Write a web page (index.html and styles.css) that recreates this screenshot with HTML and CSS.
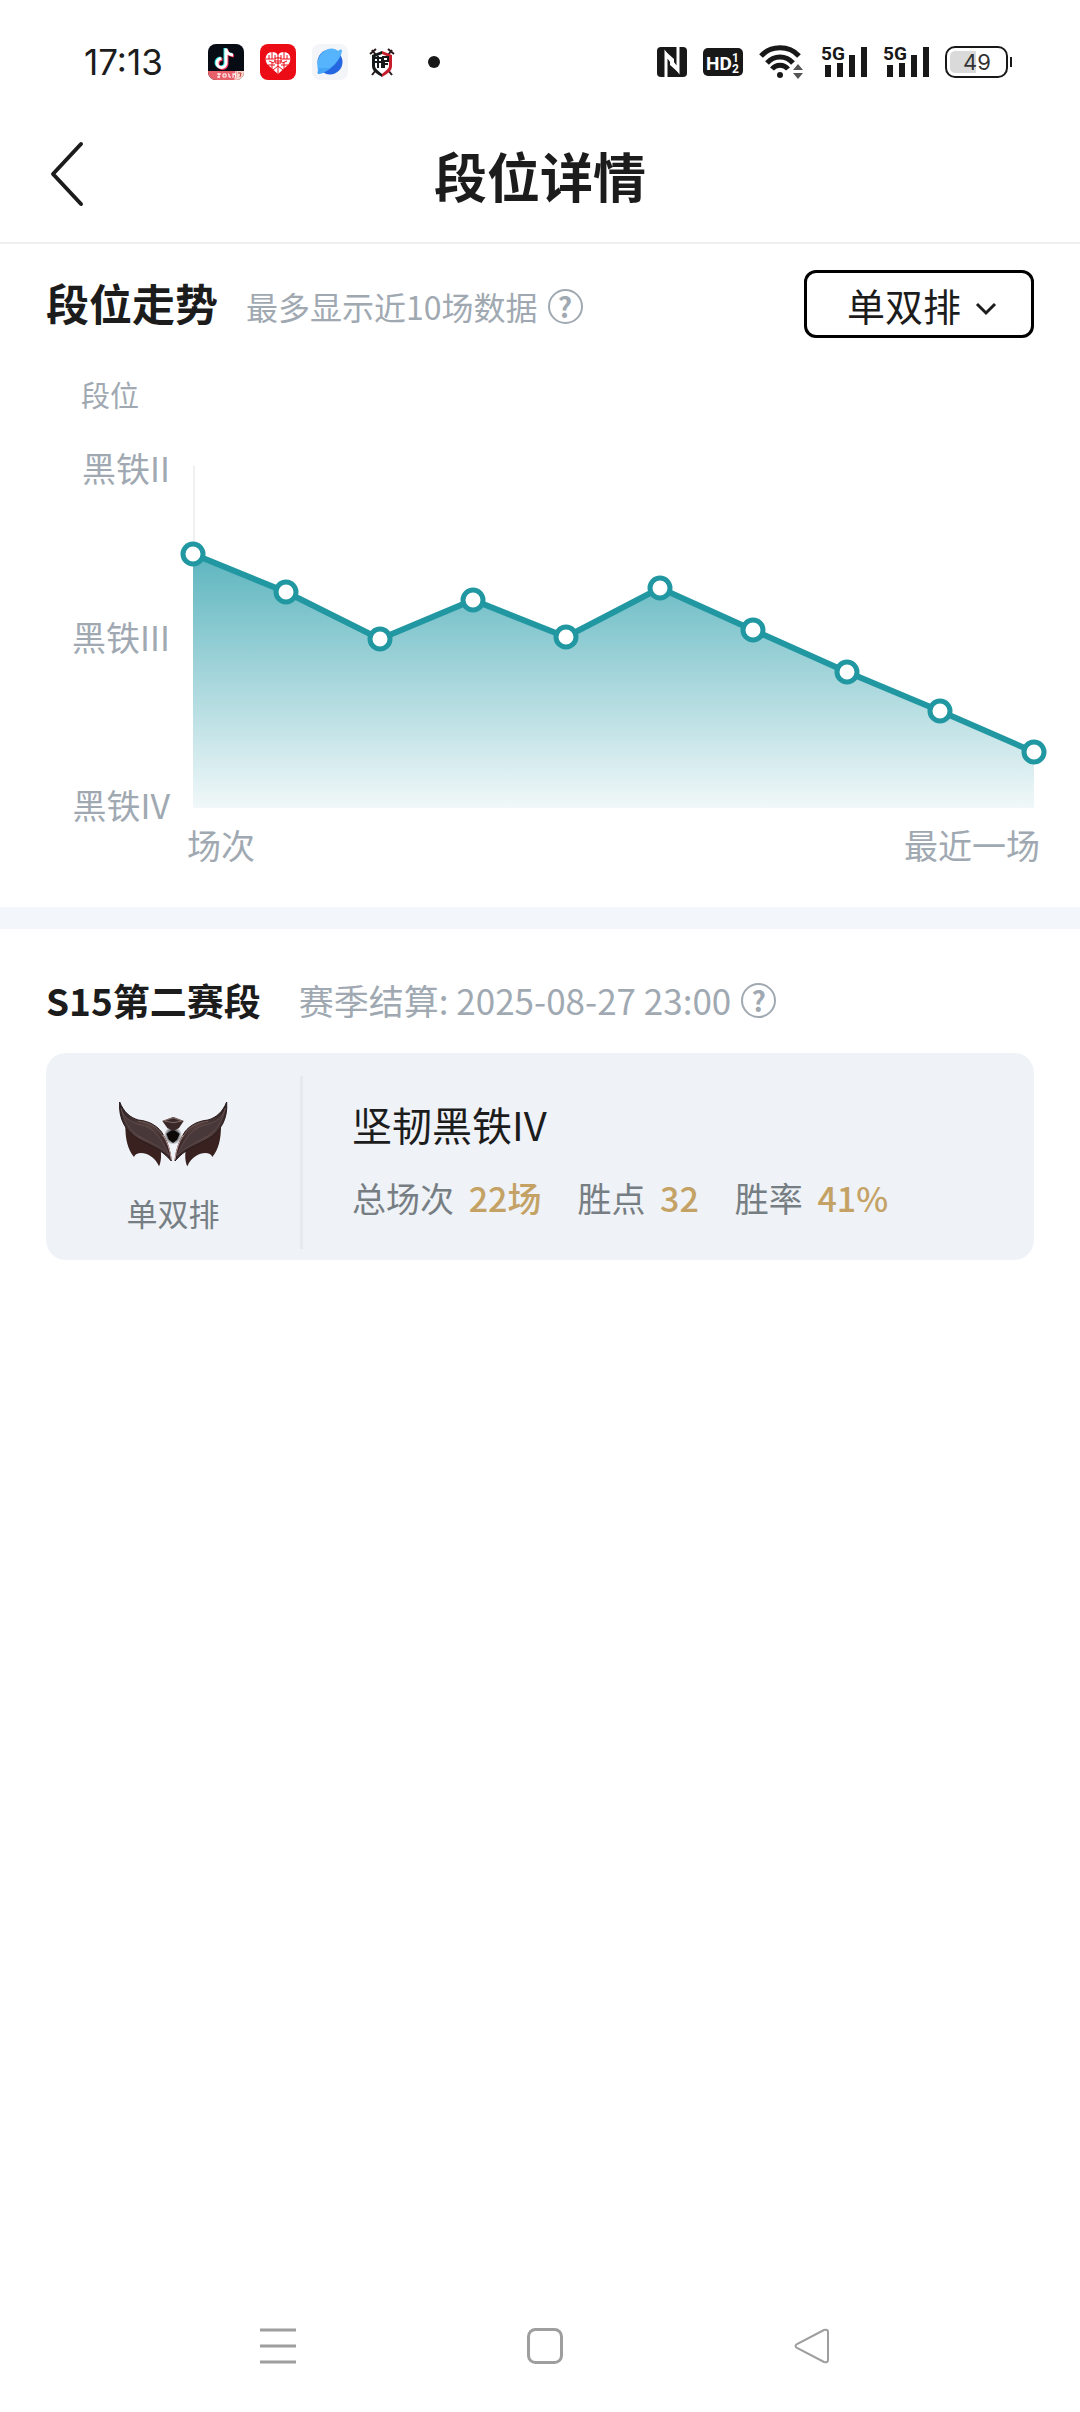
FILE: index.html
```
<!DOCTYPE html>
<html lang="zh-CN">
<head>
    <meta charset="UTF-8">
    <meta name="viewport" content="width=device-width, initial-scale=1.0">
    <title>段位详情</title>
    <link rel="stylesheet" href="styles.css">
</head>
<body>
    <div class="status-bar">
        <span class="time">17:13</span>
        <div class="app-icons">
            <svg width="36" height="36" viewBox="0 0 36 36">
                <clipPath id="appClip"><rect width="36" height="36" rx="8"/></clipPath>
                <g clip-path="url(#appClip)">
                    <rect width="36" height="36" fill="#070b14"/>
                    <g fill="none" stroke-width="3">
                        <path d="M17 4v14.500a4.500 4.500 0 1 1-4.500-4.500M17 4c0 4 3 6 7 6.500" stroke="#25e5e5"/>
                        <path d="M19 5.500v14.500a4.500 4.500 0 1 1-4.500-4.500M19 5.500c0 4 3 6 7 6.500" stroke="#f5365c"/>
                        <path d="M18 4.500v14.500a4.500 4.500 0 1 1-4.500-4.500M18 4.500c0 4 3 6 7 6.500" stroke="#fff"/>
                    </g>
                    <path d="M0 27h36v9H0z" fill="#e8606a"/>
                    <path d="M9 30h4M11 29v5M9 33h3M15 30h3v3h-3zM20 30h1v3h2M24 30h3l-2 1v3M28 27l-1 9" stroke="#fff" fill="none"/>
                    <path d="M29 27h7v9h-8z" fill="#f8d5c8"/>
                    <path d="M30 29h3l-1 4" stroke="#c43b3b" fill="none"/>
                </g>
            </svg>
            <svg width="36" height="36" viewBox="0 0 36 36">
                <rect width="36" height="36" rx="8" fill="#ec0c16"/>
                <path d="M18 30L8 21c-4-4-3-13 4-13 3 0 5 1 6 3 1-2 3-3 6-3 7 0 8 9 4 13z" fill="#fff"/>
                <g fill="none" stroke="#ec0c16">
                    <path d="M18 9v5M18 19v11M6 15h8M22 15h8M8 21h7M21 21h7M12 8v7M24 8v7M12 18v7M24 18v7M15 11v4M21 11v4M9 11v4M27 11v4M9 17l5 2M27 17l-5 2M13 26l5-4 5 4"/>
                    <path d="M15 14h6v5h-6zM18 13v7M14 17h8" stroke-width="1"/>
                </g>
            </svg>
            <svg width="36" height="36" viewBox="0 0 36 36">
                <rect width="36" height="36" rx="8" fill="#f3f5f8"/>
                <circle cx="18" cy="18" r="12.500" fill="#2567e0"/>
                <path d="M29 11C25 20 16 28 7 29C4 22 5 13 11 8S23 4 26 7c2-2 4-2 4 0z" fill="#55b4fb"/>
                <path d="M7 24c-2 4-2 6 0 6 3 0 8-3 12-6z" fill="#46a4f6"/>
            </svg>
            <svg width="36" height="36" viewBox="0 0 36 36">
                <path d="M8 6l20 25M28 6L8 31M6 10l6-5M24 5l6 5" stroke="#29191b" stroke-width="2" fill="none"/>
                <path d="M18 7l10 4v11c0 5-5 8-10 11z" fill="#c61d2d"/>
                <path d="M18 7L8 11v11c0 5 5 8 10 11z" fill="#17181a"/>
                <path d="M18 10l7 3v9c0 3-4 5-7 8-3-3-7-5-7-8v-9z" fill="#fff"/>
                <path d="M11 14h7M14 12v12M11 18h7M18 15v9M19 13h5v4h-5zM20 17v7M20 20h4" stroke="#17181a" stroke-width="2" fill="none"/>
            </svg>
            <svg width="36" height="36" viewBox="0 0 36 36"><circle cx="18" cy="18" r="6" fill="#181818"/></svg>
        </div>
        <div class="system-icons">
            <svg width="30" height="30" viewBox="0 0 30 30">
                <rect width="30" height="30" rx="4" fill="#181818"/>
                <path d="M9 30V7l12 16V0" fill="none" stroke="#fff" stroke-width="3"/>
                <path d="M8 4l9 8v7zM22 26l-9-8v-7z" fill="#fff"/>
            </svg>
            <svg width="40" height="28" viewBox="0 0 40 28">
                <rect width="40" height="28" rx="5" fill="#181818"/>
                <text x="3" y="22" class="hd-text">HD</text>
                <text x="29" y="14" class="hd-small">1</text>
                <text x="29" y="25" class="hd-small">2</text>
            </svg>
            <svg width="46" height="34" viewBox="0 0 46 34">
                <g fill="none" stroke="#181818" stroke-width="5">
                    <path d="M2 11c10-11 28-11 38 0"/>
                    <path d="M8 18c7-8 19-8 26 0"/>
                    <path d="M13 24c4-5 12-5 16 0"/>
                </g>
                <circle cx="21" cy="30" r="3" fill="#181818"/>
                <path d="M34 25l5-6 5 6zM34 28h10l-5 6z" fill="#555"/>
            </svg>
            <svg width="46" height="34" viewBox="0 0 46 34">
                <text x="0" y="15" class="net-text">5G</text>
                <path d="M7 20v12M19 18v14M31 10v22M43 2v30" stroke="#181818" stroke-width="6"/>
            </svg>
            <svg width="46" height="34" viewBox="0 0 46 34">
                <text x="0" y="15" class="net-text">5G</text>
                <path d="M7 20v12M19 18v14M31 10v22M43 2v30" stroke="#181818" stroke-width="6"/>
            </svg>
            <svg width="67" height="32" viewBox="0 0 67 32">
                <rect x="1" y="1" width="61" height="30" rx="9" fill="none" stroke="#181818" stroke-width="2"/>
                <path d="M31 5H11c-4 0-6 2-6 6v10c0 4 2 6 6 6h20z" fill="#dadada"/>
                <path d="M66 11v10" stroke="#181818" stroke-width="2"/>
                <text x="32" y="24" class="battery-text">49</text>
            </svg>
        </div>
    </div>

    <header class="title-bar">
        <button class="back" aria-label="返回">
            <svg width="36" height="66" viewBox="0 0 36 66">
                <path d="M33 2L5 32l28 30" fill="none" stroke="#1c1c1c" stroke-width="4" stroke-linecap="round" stroke-linejoin="round"/>
            </svg>
        </button>
        <h1>段位详情</h1>
    </header>

    <section class="trend">
        <div class="trend-head">
            <h2>段位走势</h2>
            <div class="hint">
                <span class="note">最多显示近10场数据</span>
                <button class="help" aria-label="走势说明">?</button>
            </div>
            <div class="queue">
                <select aria-label="队列类型">
                    <option>单双排</option>
                </select>
                <svg width="20" height="14" viewBox="0 0 20 14">
                    <path d="M1 2l9 9 9-9" fill="none" stroke="#1c1c1c" stroke-width="3"/>
                </svg>
            </div>
        </div>
        <div class="axis-title">段位</div>
        <div class="chart">
            <div class="y-labels">
                <span>黑铁II</span>
                <span>黑铁III</span>
                <span>黑铁IV</span>
            </div>
            <svg class="plot" viewBox="0 0 841 342">
                <defs>
                    <linearGradient id="areaFill" x1="0" y1="0" x2="0" y2="1">
                        <stop offset="0" stop-color="#5db5bf"/>
                        <stop offset="1" stop-color="#f1f8f9"/>
                    </linearGradient>
                </defs>
                <path d="M1 0v342" stroke="#f0f0f2" stroke-width="2"/>
                <path d="M0 88L93 126L187 173L280 134L373 171L467 122L560 164L654 206L747 245L841 286V342H0z" fill="url(#areaFill)"/>
                <path class="line" d="M0 88L93 126L187 173L280 134L373 171L467 122L560 164L654 206L747 245L841 286"/>
                <g class="dots">
                    <circle cx="0" cy="88" r="10"/>
                    <circle cx="93" cy="126" r="10"/>
                    <circle cx="187" cy="173" r="10"/>
                    <circle cx="280" cy="134" r="10"/>
                    <circle cx="373" cy="171" r="10"/>
                    <circle cx="467" cy="122" r="10"/>
                    <circle cx="560" cy="164" r="10"/>
                    <circle cx="654" cy="206" r="10"/>
                    <circle cx="747" cy="245" r="10"/>
                    <circle cx="841" cy="286" r="10"/>
                </g>
            </svg>
            <div class="x-labels">
                <span>场次</span>
                <span>最近一场</span>
            </div>
        </div>
    </section>

    <section class="season">
        <div class="season-head">
            <h3>S15第二赛段</h3>
            <span class="settle">赛季结算: 2025-08-27 23:00</span>
            <button class="help" aria-label="结算说明">?</button>
        </div>
        <div class="card">
            <div class="emblem">
                <svg width="108" height="66" viewBox="60 62 324 198">
                    <defs>
                        <linearGradient id="wing" x1="0" y1="0" x2="1" y2="1">
                            <stop offset="0" stop-color="#2a2022"/>
                            <stop offset="0.5" stop-color="#54403f"/>
                            <stop offset="1" stop-color="#2c1d1f"/>
                        </linearGradient>
                        <radialGradient id="core">
                            <stop offset="0.3" stop-color="#000"/>
                            <stop offset="1" stop-color="#000" stop-opacity="0"/>
                        </radialGradient>
                        <g id="half">
                            <path d="M79 138C79 175 86 208 105 230C112 209 161 214 180 258C185 246 188 232 185 208z" fill="#38211f"/>
                            <path d="M62 65C75 96 92 111 118 119C153 122 181 140 193 164C207 187 214 215 217 242C187 207 160 199 119 176C80 155 58 115 62 65z" fill="url(#wing)" stroke="#29191b" stroke-width="3"/>
                            <path d="M66 84C74 110 91 124 123 133C160 140 188 170 211 226C181 196 151 187 119 167C91 150 75 124 66 84z" fill="#48383a" stroke="#6d5653" stroke-width="2"/>
                            <path d="M117 123C157 127 180 145 193 170" fill="none" stroke="#6d5653" stroke-width="3"/>
                            <path d="M192 164C205 184 213 208 217 238" fill="none" stroke="#c5a09c" stroke-width="3"/>
                        </g>
                    </defs>
                    <use href="#half"/>
                    <use href="#half" transform="translate(445 0) scale(-1 1)"/>
                    <ellipse cx="222" cy="165" rx="27" ry="28" fill="url(#core)"/>
                    <path d="M202 160l20-12 20 12-8 18-12 10-12-10z" fill="#0c0808"/>
                    <path d="M190 122l33-12 31 12-14 21-17 9-18-9z" fill="#3a2828"/>
                    <path d="M190 122l33-12 31 12-31 7z" fill="#806b66"/>
                    <path d="M200 121l23-7 20 7-20 5z" fill="#3a2b2b"/>
                </svg>
                <span>单双排</span>
            </div>
            <div class="info">
                <div class="rank">坚韧黑铁IV</div>
                <div class="stats">
                    <span>总场次 <b>22场</b></span>
                    <span>胜点 <b>32</b></span>
                    <span>胜率 <b>41%</b></span>
                </div>
            </div>
        </div>
    </section>

    <nav class="nav-bar">
        <button aria-label="最近任务">
            <svg width="36" height="36" viewBox="0 0 36 36">
                <path d="M0 2h36M0 18h36M0 34h36" stroke="#9e9e9e" stroke-width="3"/>
            </svg>
        </button>
        <button aria-label="主屏幕">
            <svg width="36" height="36" viewBox="0 0 36 36">
                <rect x="1.500" y="1.500" width="33" height="33" rx="7" fill="none" stroke="#9e9e9e" stroke-width="3"/>
            </svg>
        </button>
        <button aria-label="返回上一页">
            <svg width="36" height="36" viewBox="0 0 36 36">
                <path d="M30 2L3 16q-3 2 0 4l27 14q4 1 4-2V4q0-3-4-2z" fill="none" stroke="#9e9e9e" stroke-width="2"/>
            </svg>
        </button>
    </nav>
</body>
</html>
```
FILE: styles.css
```
* {
    box-sizing: border-box;
}
body {
    margin: 0;
    min-height: 100vh;
    display: flex;
    flex-direction: column;
    background: #fff;
    color: #1c1c1c;
    font-family: "Noto Sans CJK SC", sans-serif;
}
h1, h2, h3 {
    margin: 0;
    font-weight: bold;
}
button {
    padding: 0;
    border: none;
    background: none;
    font-family: inherit;
    cursor: pointer;
}
svg {
    display: block;
    flex-shrink: 0;
    overflow: visible;
}

/* status bar */
.status-bar {
    display: flex;
    align-items: center;
    height: 110px;
    padding: 14px 68px 0 84px;
}
.time {
    min-width: 124px;
    font-family: Inter, sans-serif;
    font-size: 35px;
    line-height: 40px;
}
.app-icons,
.system-icons {
    display: flex;
    align-items: center;
    gap: 16px;
}
.system-icons {
    margin-left: auto;
}
.hd-text,
.hd-small,
.net-text {
    font-family: Roboto, sans-serif;
    font-weight: bold;
    fill: #fff;
}
.hd-text { font-size: 19px; }
.hd-small { font-size: 12px; }
.net-text {
    font-size: 19px;
    fill: #181818;
}
.battery-text {
    font-family: Inter, sans-serif;
    font-size: 22px;
    text-anchor: middle;
    fill: #333;
}

/* title bar */
.title-bar {
    display: grid;
    grid-template-columns: 1fr auto 1fr;
    align-items: center;
    height: 134px;
    padding: 0 48px 2px;
    border-bottom: 2px solid #f0f0f0;
}
.back {
    justify-self: start;
}
.title-bar h1 {
    font-size: 53px;
    line-height: 64px;
}

/* trend chart */
.trend {
    padding: 26px 46px 40px;
    border-bottom: 22px solid #f3f6fb;
}
.trend-head {
    display: flex;
    align-items: center;
}
.trend-head h2 {
    padding-bottom: 4px;
    font-size: 43px;
    line-height: 64px;
}
.hint {
    display: flex;
    align-items: center;
    margin-left: 28px;
    padding-top: 4px;
}
.note,
.axis-title,
.chart,
.settle {
    color: #a0a9b2;
}
.note {
    font-size: 32px;
    line-height: 48px;
}
.help {
    width: 35px;
    height: 35px;
    margin-left: 10px;
    border: 2px solid #a0a9b2;
    border-radius: 50%;
    color: #a0a9b2;
    font-size: 28px;
    font-weight: bold;
    line-height: 30px;
}
.queue {
    position: relative;
    width: 230px;
    margin-left: auto;
}
.queue select {
    display: block;
    width: 100%;
    height: 68px;
    padding: 0 40px;
    border: 3px solid #000;
    border-radius: 12px;
    background: #fff;
    color: #1c1c1c;
    font-family: inherit;
    font-size: 38px;
    appearance: none;
}
.queue svg {
    position: absolute;
    top: 32px;
    right: 38px;
    pointer-events: none;
}
.axis-title {
    margin: 36px 0 30px 35px;
    font-size: 29px;
    line-height: 40px;
}
.chart {
    display: grid;
    grid-template-columns: 124px 1fr;
    column-gap: 23px;
    font-size: 34px;
    line-height: 44px;
}
.y-labels {
    display: flex;
    flex-direction: column;
    justify-content: space-between;
    padding: 2px 0 3px;
    text-align: right;
}
.plot {
    width: 100%;
    padding: 22px 0;
}
.line {
    fill: none;
    stroke: #2097a1;
    stroke-width: 6;
}
.dots circle {
    fill: #fff;
    stroke: #2097a1;
    stroke-width: 5;
}
.x-labels {
    grid-column: 2;
    display: flex;
    justify-content: space-between;
    margin: -7px -6px 0;
}

/* season card */
.season {
    padding: 46px 46px;
}
.season-head {
    display: flex;
    align-items: center;
    margin-bottom: 28px;
}
.season-head h3 {
    font-size: 37px;
    line-height: 50px;
}
.settle {
    margin-left: 38px;
    font-size: 35px;
    line-height: 50px;
}
.card {
    display: flex;
    padding: 23px 0 11px;
    border-radius: 20px;
    background: #eff2f7;
}
.emblem {
    display: flex;
    flex-direction: column;
    align-items: center;
    gap: 24px;
    width: 257px;
    padding: 25px 0 14px;
    border-right: 3px solid #e6e9ee;
    color: #767e83;
    font-size: 31px;
    line-height: 44px;
}
.info {
    padding: 20px 0 0 49px;
}
.rank {
    margin-bottom: 24px;
    font-size: 40px;
    line-height: 56px;
}
.stats {
    display: flex;
    gap: 36px;
    color: #767e83;
    font-size: 34px;
    line-height: 44px;
}
.stats b {
    margin-left: 7px;
    color: #c4a265;
    font-weight: 500;
}

/* system navigation */
.nav-bar {
    display: flex;
    justify-content: space-between;
    margin-top: auto;
    padding: 0 250px 48px 260px;
}
```
